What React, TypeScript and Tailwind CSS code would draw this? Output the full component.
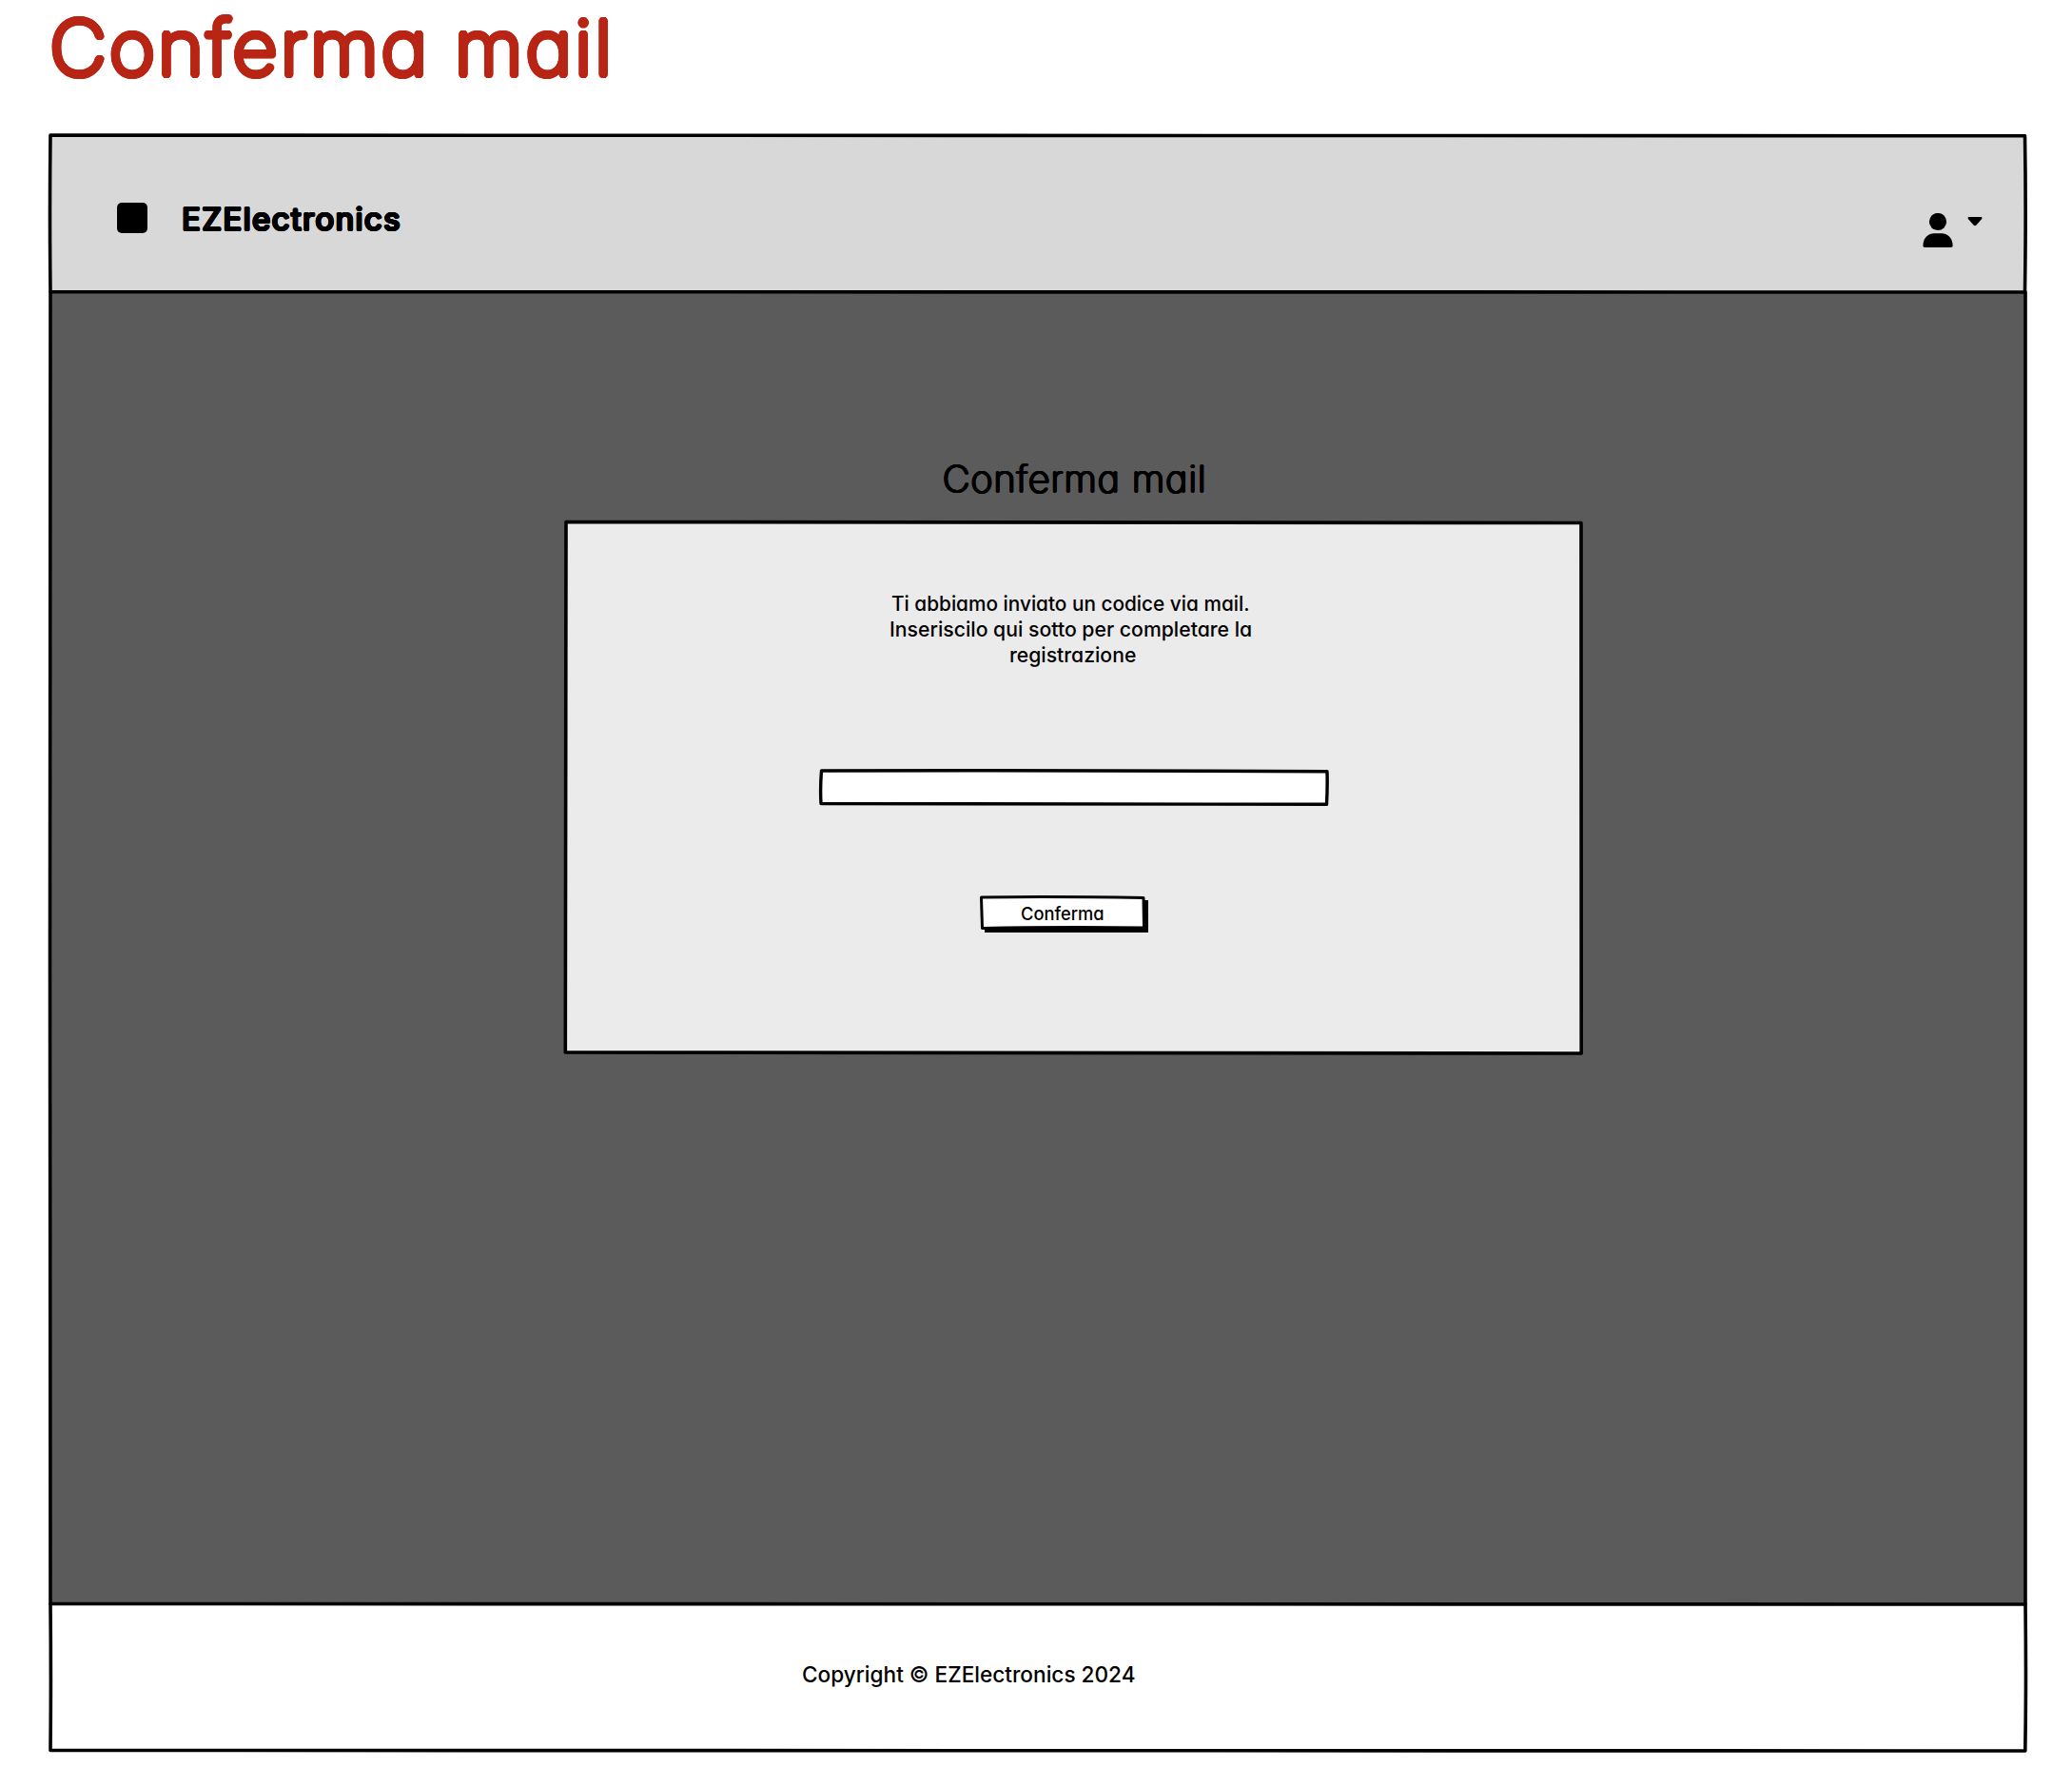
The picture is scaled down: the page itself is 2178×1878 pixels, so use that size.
import { useLayoutEffect, useRef, useState } from "react";

type FitTextProps = { text: string; width: number; className: string };

/* A single line whose glyphs are stretched to span an exact width. */
function FitText({ text, width, className }: FitTextProps) {
  const ref = useRef<HTMLSpanElement>(null);
  const [scale, setScale] = useState(1);
  useLayoutEffect(() => {
    const fit = () => {
      if (ref.current) setScale(width / ref.current.offsetWidth);
    };
    fit();
    document.fonts.ready.then(fit);
  }, [width, text]);
  return (
    <span className="block whitespace-nowrap" style={{ width }}>
      <span
        ref={ref}
        className={`inline-block origin-left align-top ${className}`}
        style={{ transform: `scaleX(${scale})` }}
      >
        {text}
      </span>
    </span>
  );
}

/* Hand-drawn outline laid over a panel; the path uses the panel's own pixels. */
function Sketch({ w, h, d, stroke = 3.6 }: { w: number; h: number; d: string; stroke?: number }) {
  return (
    <svg
      className="pointer-events-none absolute left-0 top-0 overflow-visible"
      width={w}
      height={h}
      viewBox={`0 0 ${w} ${h}`}
      fill="none"
      stroke="#000"
      strokeWidth={stroke}
      strokeLinejoin="round"
      strokeLinecap="round"
    >
      <path d={d} />
    </svg>
  );
}

/* Shadows in a ring around thin glyphs give them thick strokes with round ends. */
const roundPen =
  "[text-shadow:0.035em_0_0,-0.035em_0_0,0_0.035em_0,0_-0.035em_0,0.025em_0.025em_0,-0.025em_0.025em_0,0.025em_-0.025em_0,-0.025em_-0.025em_0,0.032em_0.013em_0,-0.032em_0.013em_0,0.032em_-0.013em_0,-0.032em_-0.013em_0,0.013em_0.032em_0,-0.013em_0.032em_0,0.013em_-0.032em_0,-0.013em_-0.032em_0]";

function Header() {
  return (
    <header className="relative z-10 flex h-[165px] items-start justify-between bg-[#d8d8d8]">
      <div className="flex items-start pl-[70px] pt-[70.500px]">
        <div className="h-8 w-8 rounded-[5px] bg-black" />
        <div className="pl-[36px] pt-[1px]">
          <FitText text="EZElectronics" width={231} className={`text-[32px] leading-[34px] tracking-[0.04em] font-normal ${roundPen}`} />
        </div>
      </div>
      <div className="flex items-start gap-[15px] pr-[45px] pt-[82px]">
        <svg className="h-9 w-8" viewBox="0 0 32 36" fill="#000">
          <circle cx="16" cy="9" r="9.1" />
          <path d="M0.4 34.2C0.4 26.5 5.5 21.2 12 21.2H20C26.500 21.2 31.600 26.500 31.600 34.200Q31.600 36 29.800 36H2.200Q0.400 36 0.400 34.200Z" />
        </svg>
        <svg className="mt-1 h-[10px] w-4" viewBox="0 0 16 10" fill="#000">
          <path d="M1.300 0H14.700Q16.200 0.600 15 2.200L9.500 8.500Q8 10 6.500 8.500L1 2.200Q-0.200 0.600 1.300 0Z" />
        </svg>
      </div>
      <Sketch w={2076} h={165} d="M0 0Q900 -1 2075.500 0.800Q2076.800 80 2075.500 165Q1100 164.500 0 164.700Q-1 80 0 0Z" />
    </header>
  );
}

function ConfirmCard() {
  return (
    <section className="relative flex h-[558px] w-[1067px] flex-col items-center bg-[#ebebeb] pt-[72px]">
      <p className="flex flex-col items-center">
        <span className="pr-[7px]">
          <FitText text="Ti abbiamo inviato un codice via mail." width={377} className="text-[21.5px] leading-[27px] font-medium" />
        </span>
        <span className="pr-[7px]">
          <FitText text="Inseriscilo qui sotto per completare la" width={381} className="text-[21.5px] leading-[27px] font-medium" />
        </span>
        <span className="pr-[2px]">
          <FitText text="registrazione" width={133} className="text-[21.5px] leading-[27px] font-medium" />
        </span>
      </p>
      <div className="relative mt-[108px] h-[35px] w-[532px] bg-white">
        <input aria-label="Codice" className="block h-full w-full bg-transparent px-3 text-lg outline-none" />
        <Sketch w={532} h={35} stroke={3.4} d="M0.500 0Q260 -0.800 532 0.800Q532.500 16 531.500 35.300Q260 36 0 34.500Q-1 18 0.500 0Z" />
      </div>
      <div className="relative mr-[24px] mt-[98px]">
        <button className="relative flex h-[32px] w-[170px] justify-center bg-white pt-[6.500px] shadow-[4px_4px_0_1px_#000]">
          <FitText text="Conferma" width={88} className="text-[18.500px] leading-[20px] font-medium" />
          <Sketch w={170} h={32} stroke={3} d="M-0.500 0Q80 -1 170 0.600L170.500 32Q80 31 0.500 32.500Z" />
        </button>
      </div>
      <Sketch w={1067} h={558} d="M0 -0.500Q500 -1.200 1067 0.500Q1068.200 280 1067.200 558Q500 559 -0.700 557Q0.700 280 0 -0.500Z" />
    </section>
  );
}

function Footer() {
  return (
    <footer className="relative h-[154px] bg-white pl-[790px] pt-[63px]">
      <FitText text="Copyright © EZElectronics 2024" width={351} className="text-[23px] leading-[23px] font-medium" />
      <Sketch w={2076} h={154} d="M0 -0.500Q1000 -1.200 2076 0Q2077 80 2075.800 154Q1100 155 0 153.500Q0.800 80 0 -0.500Z" />
    </footer>
  );
}

export default function App() {
  return (
    <div className="h-[1878px] w-[2178px] bg-white font-['Inter',sans-serif] text-black [font-feature-settings:'cv11','calt']">
      <h1 className="h-[142px] pl-[52px] pt-[4px] text-[#b82514]">
        <FitText text="Conferma mail" width={594} className={`text-[80px] leading-[91px] tracking-[0.03em] font-extralight ${roundPen}`} />
      </h1>
      <div className="ml-[53px] flex w-[2076px] flex-col">
        <Header />
        <main className="relative flex h-[1379px] flex-col items-center bg-[#5b5b5b] pt-[175px]">
          <h2 className="ml-[77px]">
            <FitText text="Conferma mail" width={278} className={`text-[37.500px] leading-[43px] tracking-[0.03em] font-thin ${roundPen}`} />
          </h2>
          <div className="ml-[75px] mt-[24px]">
            <ConfirmCard />
          </div>
          <Sketch w={2076} h={1379} d="M0 0L-0.500 700L0 1379M2076 0L2076 1379" />
        </main>
        <Footer />
      </div>
    </div>
  );
}
